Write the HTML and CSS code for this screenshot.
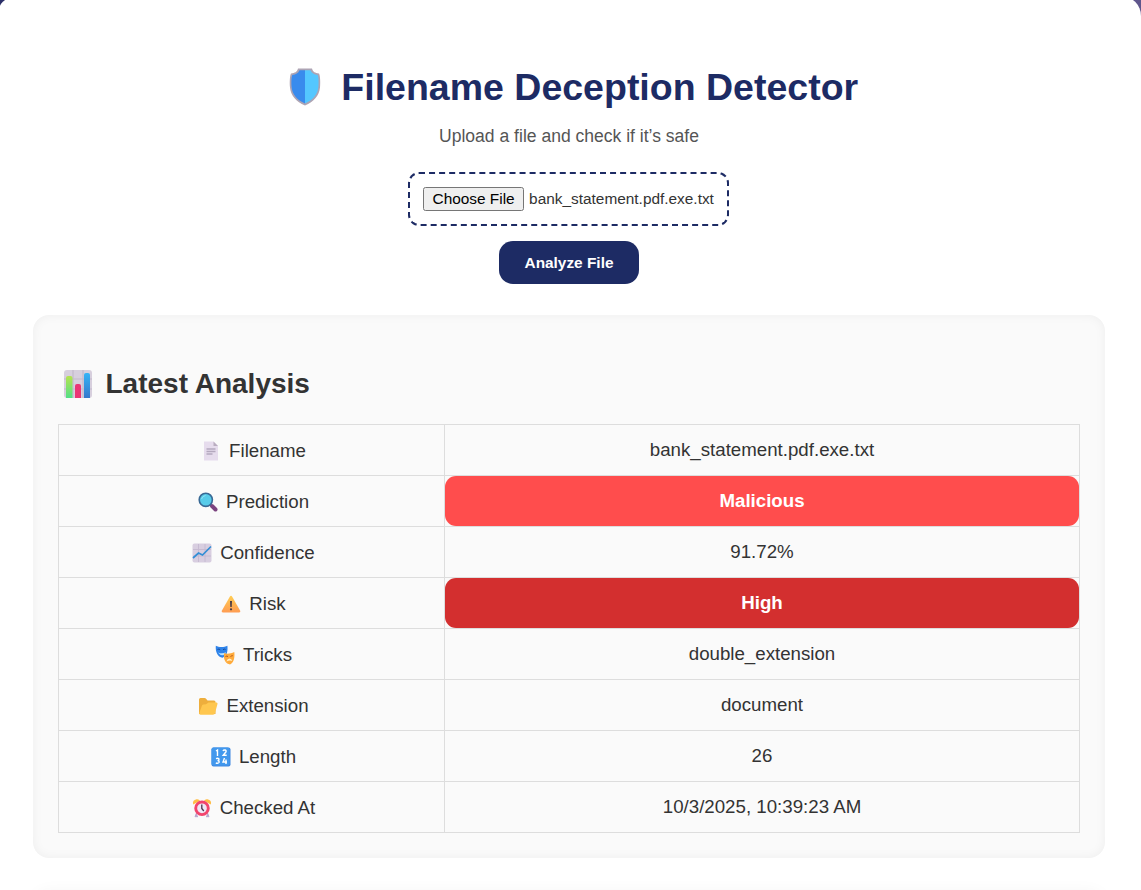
FILE: index.html
```
<!DOCTYPE html>
<html lang="en">
<head>
<meta charset="utf-8">
<title>Filename Deception Detector</title>
<link rel="stylesheet" href="styles.css">
</head>
<body>
<main class="card">
  <h1 class="title">
    <svg class="icon-xl" viewBox="0 0 38 38"><path d="M12 .5h14c1 3.500 3 4.500 7 5 1.200 2 1.500 9 1 14-.8 8-6 14-15 18C10 33.500 4.800 27.500 4 19.500c-.5-5-.2-12 1-14 4-.5 6-1.500 7-5z" fill="#ada4b4"/><path d="M13.500 2.200H19v33.300C11 32 6.300 26.500 5.600 19c-.4-4.500-.2-10 .7-12 3.700-.5 6-1.800 7.200-4.800z" fill="#398bed"/><path d="M24.500 2.200H19v33.300c8-3.500 12.700-9 13.400-16.500.4-4.500.2-10-.7-12-3.700-.5-6-1.800-7.200-4.800z" fill="#54c7ff"/></svg>
    <span>Filename Deception Detector</span>
  </h1>
  <p class="subtitle">Upload a file and check if it’s safe</p>
  <div class="picker"><button class="choose" type="button">Choose File</button><span>bank_statement.pdf.exe.txt</span></div>
  <button class="analyze" type="button">Analyze File</button>

  <section class="panel">
    <h2 class="heading">
      <svg class="icon-lg" viewBox="0 0 28 28"><defs><linearGradient id="g1" x2="0" y2="1"><stop stop-color="#b5e34f"/><stop offset="1" stop-color="#53df87"/></linearGradient><linearGradient id="g2" x2="0" y2="1"><stop stop-color="#36b4f6"/><stop offset="1" stop-color="#3578cc"/></linearGradient></defs><rect width="28" height="28" rx="3" fill="#d7cfdd"/><path d="M9 0v28M19 0v28M0 9h28M0 19h28" stroke="#c3bacb" stroke-width="1.200"/><path d="M2 28V8q0-2 2-2h2.500q2 0 2 2v20z" fill="url(#g1)"/><path d="M11 28V16q0-2 2-2h2q2 0 2 2v12z" fill="#ea3575"/><path d="M20 28V5q0-2 2-2h2q2 0 2 2v23z" fill="url(#g2)"/></svg>
      <span>Latest Analysis</span>
    </h2>
    <table class="results">
      <tr>
        <td class="label"><div><svg class="icon" viewBox="0 0 20 20"><path d="M3 .5h9.500L17 5v14.500H3z" fill="#e6dced"/><path d="M12.500.5L17 5h-4.500z" fill="#b9adc0"/><path d="M5.500 8h9M5.500 10.500h9M5.500 13h6" stroke="#b4a8be" stroke-width="1.300"/></svg><span>Filename</span></div></td>
        <td>bank_statement.pdf.exe.txt</td>
      </tr>
      <tr>
        <td class="label"><div><svg class="icon" viewBox="0 0 20 20"><path d="M12 12.500l2 1.500" stroke="#4c4868" stroke-width="2"/><path d="M14 14l3.500 3.500" stroke="#7b437f" stroke-width="4" stroke-linecap="round"/><circle cx="7.800" cy="7.800" r="6.600" fill="#57cbe9" stroke="#386995" stroke-width="1.600"/><path d="M3.500 7a5 5 0 0 1 4-3.500" stroke="#8de5f5" fill="none"/></svg><span>Prediction</span></div></td>
        <td class="badge malicious"><div>Malicious</div></td>
      </tr>
      <tr>
        <td class="label"><div><svg class="icon" viewBox="0 0 20 20"><rect x=".5" y=".5" width="19" height="19" rx="2" fill="#d8cee0"/><path d="M6.500 1v18M13 1v18M1 6.500h18M1 13h18" stroke="#c5b9d0" stroke-width=".9"/><path d="M1 15l5.500-5 4 2L19 3.500" fill="none" stroke="#338fd6" stroke-width="1.700"/></svg><span>Confidence</span></div></td>
        <td>91.72%</td>
      </tr>
      <tr>
        <td class="label"><div><svg class="icon" viewBox="0 0 20 20"><defs><linearGradient id="g3" x2="0" y2="1"><stop stop-color="#ffcd53"/><stop offset="1" stop-color="#ff9c52"/></linearGradient></defs><path d="M8.800 2.700q1.200-1.900 2.400 0l8 14q.7 1.800-1.200 1.800H2q-1.900 0-1.200-1.800z" fill="url(#g3)"/><path d="M9 7h2l-.3 6H9.300z" fill="#493b45"/><circle cx="10" cy="15.300" r="1.100" fill="#493b45"/></svg><span>Risk</span></div></td>
        <td class="badge high"><div>High</div></td>
      </tr>
      <tr>
        <td class="label"><div><svg class="icon" viewBox="0 0 20 20"><path d="M.8.8c3 1.600 8.400 1.600 11.600 0 .5 5-.2 10-4.800 12C2.500 12 .3 7 .8.800z" fill="#2f83e9"/><path d="M2.500 4.500q1.500-1 2.700.2M8 4.700q1.500-1 2.500-.2" stroke="#174b9b" fill="none"/><path d="M3 7.500q4 1.800 8-.2-1 3-3.500 3T3 7.500z" fill="#bce5ff"/><path d="M9 8.300c3 .7 7 .5 10.300-1.200.7 6-.8 11-4.300 12.400-4-.5-6.800-4-6-11.200z" fill="#ffab3c"/><path d="M10.500 11.500q1.500-1 2.500.2M15.500 11.500q1.500-1 2.300-.8" stroke="#b75a1b" fill="none"/><path d="M11.500 16.500q.8-3 3-3t2.700 2.500q-2.700-1-5.700.5z" fill="#fff0cb"/></svg><span>Tricks</span></div></td>
        <td>double_extension</td>
      </tr>
      <tr>
        <td class="label"><div><svg class="icon" viewBox="0 0 20 20"><path d="M1 18V3.500q0-1.500 1.500-1.500h4q1 0 1.800 1L9.500 4.500H16q1.500 0 1.500 1.500v12z" fill="#eeae3c"/><path d="M2.500 18.700q-1.500 0-1.200-1.700L4 9.500q.5-1 1.500-1l2.500-.3 2.500-1.700h8q1.300 0 1 1.500L17 17q-.4 1.700-2 1.700z" fill="#ffc74f"/></svg><span>Extension</span></div></td>
        <td>document</td>
      </tr>
      <tr>
        <td class="label"><div><svg class="icon" viewBox="0 0 20 20"><rect x=".5" y=".5" width="19" height="19" rx="2" fill="#4188e0"/><rect x=".5" y=".5" width="18" height="18" rx="2" fill="#4298ed"/><g fill="none" stroke="#fff" stroke-width="1.400"><path d="M5 4l1.500-1v6M12 4q.5-1.200 2-1 1.500.3 1 1.800L12.200 8.300h3.500M5 11.700q3-1 3 .6 0 1.200-1.500 1.200Q8.500 13.500 8 15.500q-.8 1.300-3.200.5M13.500 11L12 15h4M15 12.500V17"/></g></svg><span>Length</span></div></td>
        <td>26</td>
      </tr>
      <tr>
        <td class="label"><div><svg class="icon" viewBox="0 0 20 20"><path d="M4.500 15L3 18.700h3M15.500 15l1.500 3.700h-3" fill="#b8a7ce" stroke="#b8a7ce"/><path d="M1.200 6.500Q0 2 4.500 1.200q2.500-.4 3.500 1.500z" fill="#ffbd45"/><path d="M18.800 6.500Q20 2 15.500 1.200 13 .8 12 2.700z" fill="#ffbd45"/><circle cx="10" cy="10.300" r="6.300" fill="#eee8f5" stroke="#f2456d" stroke-width="2.900"/><path d="M9.800 6.500v4l2 2.500" fill="none" stroke="#473650" stroke-width="1.300"/></svg><span>Checked At</span></div></td>
        <td>10/3/2025, 10:39:23 AM</td>
      </tr>
    </table>
  </section>
  <section class="panel next"></section>
</main>
</body>
</html>
```
FILE: styles.css
```
* { box-sizing: border-box; }
html { height: 100%; overflow: hidden; }
body {
  margin: 0;
  height: 100%;
  overflow: hidden;
  background: linear-gradient(90deg, #2b3068, #5f568c);
  font-family: Arial, "Liberation Sans", sans-serif;
  font-size: 18.7px;
  color: #333;
}
.card {
  width: 1144px;
  height: 894px;
  overflow: hidden;
  margin: -4px 0 0 -3px;
  padding: 64px 36px 0;
  border-radius: 20px 20px 0 0;
  background: #fff;
  display: flex;
  flex-direction: column;
  align-items: center;
}
.card > * { flex: none; }
.title {
  display: flex;
  align-items: center;
  height: 54px;
  margin: 0;
  color: #1d2b64;
  font-size: 37.5px;
  line-height: 54px;
  white-space: nowrap;
}
.icon-xl { width: 38px; height: 38px; margin: 0 17.5px 0 6px; }
.subtitle {
  margin: 12px 0 0;
  font-size: 17.55px;
  line-height: 20px;
  color: #555;
}
.picker {
  display: flex;
  align-items: center;
  justify-content: center;
  gap: 5px;
  width: 321px;
  height: 54px;
  margin: 26px 1px 0 0;
  border: 2px dashed #1d2b64;
  border-radius: 11px;
  font-size: 15.4px;
}
.choose {
  width: 101px;
  height: 24px;
  padding: 0;
  border: 1px solid #767676;
  border-radius: 2.5px;
  background: #efefef;
  color: #000;
  font: inherit;
}
.analyze {
  width: 140px;
  height: 43px;
  margin-top: 15px;
  padding: 0;
  border: 0;
  border-radius: 14px;
  background: #1d2b64;
  color: #fff;
  font: bold 15.4px Arial, "Liberation Sans", sans-serif;
}
.panel {
  width: 1072px;
  height: 543px;
  margin-top: 31px;
  padding: 49px 25px 0;
  border-radius: 16px;
  background: #fafafa;
  box-shadow: inset 0 0 11px rgba(0, 0, 0, .05);
}
.card > .next {
  height: 60px;
  margin-top: 33px;
  background: #fff;
  box-shadow: 0 0 16px rgba(0, 0, 0, .04);
}
.heading {
  display: flex;
  align-items: center;
  height: 40px;
  margin: 0 0 20px;
  font-size: 28px;
}
.icon-lg { width: 28px; height: 28px; margin: 0 13.5px 0 6px; }
.results {
  width: 1022px;
  table-layout: fixed;
  border-collapse: collapse;
  text-align: center;
}
.results td {
  height: 51px;
  padding: 0;
  border: 1px solid #ddd;
  line-height: 50px;
}
.results .label { width: 386px; }
.label div {
  display: flex;
  align-items: center;
  justify-content: center;
  height: 50px;
  padding: 2px 0 0 1px;
}
.icon { width: 20px; height: 20px; margin: 0 8px 0 3px; }
.badge { color: #fff; font-weight: bold; }
.badge div { height: 50px; border-radius: 11px; }
.malicious div { background: #ff4d4d; }
.high div { background: #d32f2f; }
```
